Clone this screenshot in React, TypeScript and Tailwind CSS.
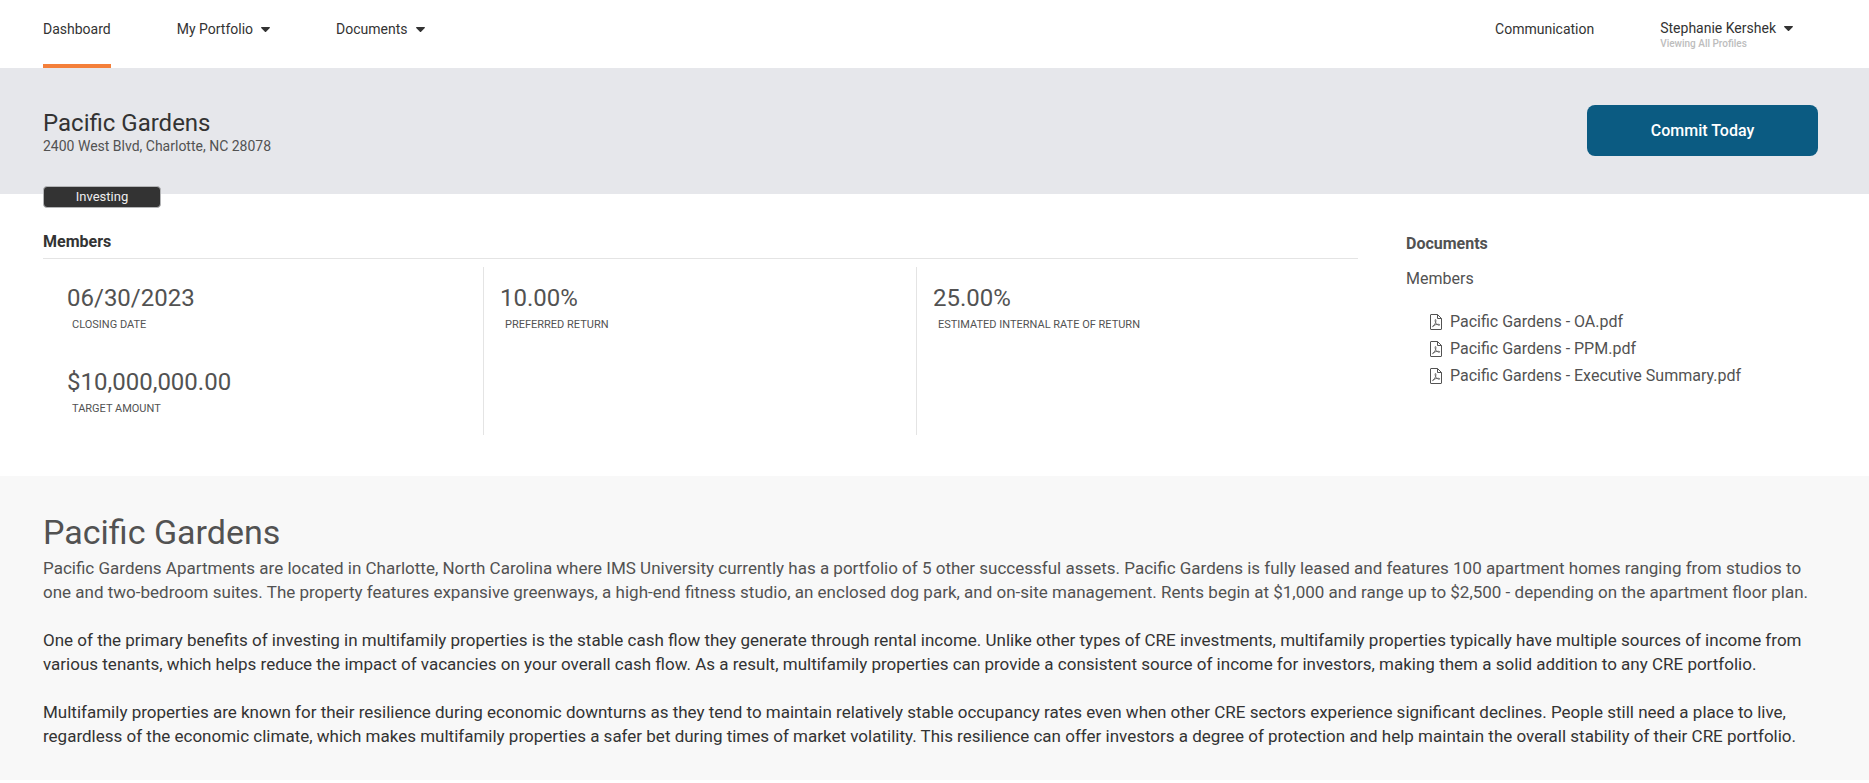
import React from 'react';

interface Metric {
  value: string;
  label: string;
}

// Each inner array is one column of the members grid
const metricColumns: Metric[][] = [
  [
    { value: '06/30/2023', label: 'Closing Date' },
    { value: '$10,000,000.00', label: 'Target Amount' },
  ],
  [{ value: '10.00%', label: 'Preferred Return' }],
  [{ value: '25.00%', label: 'Estimated Internal Rate of Return' }],
];

const documents = [
  'Pacific Gardens - OA.pdf',
  'Pacific Gardens - PPM.pdf',
  'Pacific Gardens - Executive Summary.pdf',
];

function Caret() {
  return (
    <svg className="h-[5px] w-[9px]" viewBox="0 0 9 5" fill="currentColor" aria-hidden="true">
      <path d="M0.6 0h7.8c.5 0 .7.5.4.9L5.1 4.7c-.3.4-.9.4-1.2 0L.2.9C-.1.5.1 0 .6 0z" />
    </svg>
  );
}

function PdfIcon() {
  return (
    <svg
      className="h-4 w-3 shrink-0"
      viewBox="0 0 12 16"
      fill="none"
      stroke="currentColor"
      aria-hidden="true"
    >
      <path d="M1 .5h6.500l4 4v10.500a.5.5 0 0 1-.5.5h-10a.5.5 0 0 1-.5-.5v-14a.5.5 0 0 1 .5-.5z" />
      <path d="M7.500.5v4h4" />
      <path
        strokeWidth="0.8"
        d="M5.500 5.500c-.6 0-.5 1.500.1 2.900.7 1.500 2.200 2.900 3.600 2.900.8 0 .8-.9-.3-1-2-.1-4.600.6-5.800 1.400-1 .7-.5 1.400.2.8 1-1 2.400-3.600 2.600-5.400.1-.9 0-1.600-.4-1.600z"
      />
    </svg>
  );
}

function Header() {
  return (
    <header className="flex h-[68px] items-stretch justify-between pl-[43px] pr-[76px] text-sm leading-5">
      <nav className="flex gap-[66px]">
        <a href="#dashboard" className="border-b-4 border-[#f47f3a] pt-[19px]">
          Dashboard
        </a>
        <button type="button" className="flex items-center gap-2 self-start pt-[19px]">
          My Portfolio
          <Caret />
        </button>
        <button type="button" className="flex items-center gap-2 self-start pt-[19px]">
          Documents
          <Caret />
        </button>
      </nav>
      <div className="flex items-start gap-[66px]">
        <a href="#communication" className="pt-[19px]">
          Communication
        </a>
        <button type="button" className="pt-[18px] text-left">
          <span className="flex items-center gap-2">
            Stephanie Kershek
            <Caret />
          </span>
          <span className="block text-[10px] font-medium leading-3 text-[#bdbdbd]">
            Viewing All Profiles
          </span>
        </button>
      </div>
    </header>
  );
}

function Hero() {
  return (
    <section className="relative flex h-[126px] items-center justify-between bg-[#e6e7eb] pb-px pl-[43px] pr-[51px]">
      <div className="pt-1">
        <h1 className="text-2xl leading-[26px]">Pacific Gardens</h1>
        <p className="text-sm leading-5 text-[#525252]">2400 West Blvd, Charlotte, NC 28078</p>
      </div>
      <button
        type="button"
        className="h-[51px] w-[231px] rounded-lg bg-[#0b5b82] text-base font-medium text-white"
      >
        Commit Today
      </button>
      <span className="absolute -bottom-[14px] left-[43px] w-[118px] rounded border border-[#b4b5b7] bg-[#333333] text-center text-[13px] leading-5 text-[#eeeeee]">
        Investing
      </span>
    </section>
  );
}

function Summary() {
  return (
    <section className="grid grid-cols-[1fr_412px] gap-12 pb-[41px] pl-[43px] pr-[51px] pt-9 text-[#525252]">
      <div>
        <h2 className="border-b border-[#e4e4e4] pb-1 text-base font-bold leading-6 text-[#333333]">
          Members
        </h2>
        <div className="mt-2 grid grid-cols-3 px-2">
          {metricColumns.map((column, index) => (
            <dl
              key={index}
              className={index < metricColumns.length - 1 ? 'border-r border-[#e4e4e4]' : ''}
            >
              {column.map((metric) => (
                <div
                  key={metric.label}
                  className="flex flex-col-reverse gap-[5px] px-4 pb-[18px] pt-[17px]"
                >
                  <dt className="pl-[5px] text-[11px] uppercase leading-4">{metric.label}</dt>
                  <dd className="text-2xl leading-7">{metric.value}</dd>
                </div>
              ))}
            </dl>
          ))}
        </div>
      </div>

      <aside>
        <h2 className="pt-[2px] text-base font-bold leading-6">Documents</h2>
        <h3 className="mt-[11px] text-base leading-6">Members</h3>
        <ul className="mt-[17px] pl-6">
          {documents.map((name) => (
            <li key={name}>
              <a href="#document" className="flex items-center gap-2 leading-[27px]">
                <PdfIcon />
                {name}
              </a>
            </li>
          ))}
        </ul>
      </aside>
    </section>
  );
}

function Description() {
  return (
    <section className="flex flex-col gap-6 bg-[#f8f8f8] py-8 pl-[43px] pr-[51px] text-[17px] leading-6">
      <div className="text-[#525252]">
        <h2 className="text-[34px] leading-[48px]">Pacific Gardens</h2>
        <p>
          Pacific Gardens Apartments are located in Charlotte, North Carolina where IMS University
          currently has a portfolio of 5 other successful assets. Pacific Gardens is fully leased and
          features 100 apartment homes ranging from studios to one and two-bedroom suites. The
          property features expansive greenways, a high-end fitness studio, an enclosed dog park, and
          on-site management. Rents begin at $1,000 and range up to $2,500 - depending on the
          apartment floor plan.
        </p>
      </div>
      <p>
        One of the primary benefits of investing in multifamily properties is the stable cash flow
        they generate through rental income. Unlike other types of CRE investments, multifamily
        properties typically have multiple sources of income from various tenants, which helps reduce
        the impact of vacancies on your overall cash flow. As a result, multifamily properties can
        provide a consistent source of income for investors, making them a solid addition to any CRE
        portfolio.
      </p>
      <p>
        Multifamily properties are known for their resilience during economic downturns as they tend
        to maintain relatively stable occupancy rates even when other CRE sectors experience
        significant declines. People still need a place to live, regardless of the economic climate,
        which makes multifamily properties a safer bet during times of market volatility. This
        resilience can offer investors a degree of protection and help maintain the overall stability
        of their CRE portfolio.
      </p>
    </section>
  );
}

export default function App() {
  return (
    <div className="bg-white font-['Roboto',sans-serif] text-base leading-6 text-[#333333]">
      <Header />
      <main>
        <Hero />
        <Summary />
        <Description />
      </main>
    </div>
  );
}
